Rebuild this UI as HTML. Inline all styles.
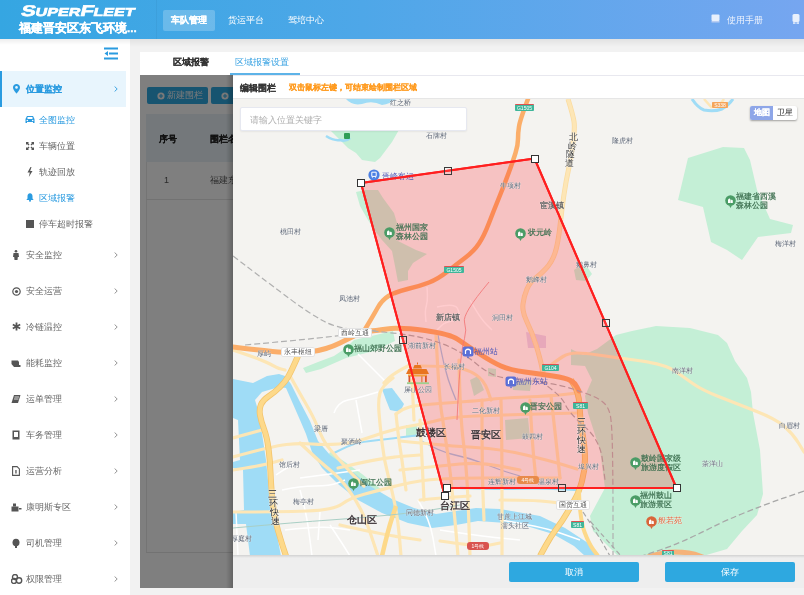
<!DOCTYPE html>
<html><head><meta charset="utf-8">
<style>
*{margin:0;padding:0;box-sizing:border-box}
html,body{width:804px;height:595px;overflow:hidden;background:#f2f2f2;font-family:"Liberation Sans",sans-serif}
#wrap{position:absolute;left:0;top:0;width:804px;height:595px;will-change:transform}
.abs{position:absolute}
[style*="font-weight:bold"]{-webkit-text-stroke:0.12px}
.nav[style*="font-weight:bold"]{-webkit-text-stroke:0.2px}
#hdr{left:0;top:0;width:804px;height:39px;background:linear-gradient(90deg,#35a6e2 0%,#4ea7e8 45%,#76a6f0 100%)}
#logo{left:21px;top:3px;color:#fff;font-weight:bold;font-style:italic;font-size:15px;letter-spacing:0px;white-space:nowrap}
#sub{left:19px;top:20.5px;color:#fff;font-weight:bold;font-size:11.7px;line-height:14px;white-space:nowrap;-webkit-text-stroke:0.3px #fff}
.nav{top:10px;height:21px;line-height:21px;color:#fff;font-size:9px;white-space:nowrap}
#side{left:0;top:39px;width:130px;height:556px;background:#fff}
.mi{position:absolute;left:0;width:130px;height:36px;font-size:9px;color:#666}
.mi .t{position:absolute;left:26px;top:13px;line-height:10px;white-space:nowrap}
.mi .ch{position:absolute;left:114px;top:15px}
.si{position:absolute;left:0;width:130px;height:26px;font-size:9px;color:#666}
.si .t{position:absolute;left:39px;top:8px;line-height:10px;white-space:nowrap}
</style></head><body><div id="wrap">
<div id="hdr" class="abs"></div>
<svg class="abs" style="left:17px;top:2px" width="122" height="17" viewBox="0 0 122 17"><g transform="skewX(-14)"><text x="7" y="14.5" fill="#fff" stroke="#fff" stroke-width="0.6" font-family="Liberation Sans" font-weight="bold" textLength="113.5" lengthAdjust="spacingAndGlyphs"><tspan font-size="15.5">S</tspan><tspan font-size="11.5">UPER</tspan><tspan font-size="15.5">F</tspan><tspan font-size="11.5">LEET</tspan></text></g></svg>
<div id="sub" class="abs">福建晋安区东飞环境...</div>
<div class="abs" style="left:156px;top:0;width:1px;height:39px;background:rgba(0,0,0,0.04)"></div>
<div class="abs nav" style="left:163px;width:52px;background:rgba(255,255,255,0.22);border-radius:2px;font-weight:bold;text-align:center">车队管理</div>
<div class="abs nav" style="left:228px">货运平台</div>
<div class="abs nav" style="left:288px">驾培中心</div>
<div class="abs nav" style="left:727px;color:#eef3fd">使用手册</div>
<svg class="abs" style="left:711px;top:14px" width="9" height="9" viewBox="0 0 9 9"><rect x="0.5" y="0.5" width="8" height="6.5" rx="1" fill="#e8f0fc"/><rect x="0.5" y="7" width="8" height="1.5" fill="#b9cdf2"/></svg>
<svg class="abs" style="left:792px;top:14px" width="8" height="10" viewBox="0 0 8 10"><rect x="0.5" y="0" width="7" height="8" rx="1.5" fill="#e8f0fc"/><rect x="1" y="8.3" width="2.5" height="1.5" fill="#e8f0fc"/><rect x="4.5" y="8.3" width="2.5" height="1.5" fill="#e8f0fc"/></svg>

<div id="side" class="abs">
<svg class="abs" style="left:104px;top:8px" width="15" height="13" viewBox="0 0 15 13"><rect x="0" y="0.5" width="14" height="2" fill="#2a9be0"/><rect x="5" y="5.5" width="9" height="2" fill="#2a9be0"/><rect x="0" y="10.5" width="14" height="2" fill="#2a9be0"/><path d="M0.5 6.5 L4 4 L4 9 Z" fill="#2a9be0"/></svg>
<div class="mi" style="top:32px;background:#e8f5fd;border-left:2px solid #2a9be0;width:126px">
 <svg class="abs" style="left:11px;top:13px" width="7" height="10" viewBox="0 0 7 10"><path d="M3.5 0C1.6 0 0 1.5 0 3.4 0 5.8 3.5 9.5 3.5 9.5S7 5.8 7 3.4C7 1.5 5.4 0 3.5 0Z" fill="#2a9be0"/><circle cx="3.5" cy="3.4" r="1.3" fill="#e8f5fd"/></svg>
 <div class="t" style="left:24px;color:#2a9be0;font-weight:bold">位置监控</div>
 <svg class="ch" style="left:112px" width="4" height="6" viewBox="0 0 4 6"><path d="M0.6 0.5L3.2 3L0.6 5.5" stroke="#2a9be0" stroke-width="0.9" fill="none"/></svg>
</div>
<div class="si" style="top:68px;color:#2a9be0"><svg class="abs" style="left:25px;top:8px" width="10" height="9" viewBox="0 0 10 9"><path d="M2 1 L8 1 L9.5 4 L9.5 8 L8 8 L8 7 L2 7 L2 8 L0.5 8 L0.5 4 Z" fill="#2a9be0"/><rect x="2.5" y="2" width="5" height="2" fill="#fff"/><circle cx="2.3" cy="5.5" r="0.8" fill="#fff"/><circle cx="7.7" cy="5.5" r="0.8" fill="#fff"/></svg><div class="t">全图监控</div></div>
<div class="si" style="top:94px"><svg class="abs" style="left:26px;top:9px" width="8" height="8" viewBox="0 0 8 8"><path d="M0 0h3L2 1l1.5 1.5-1 1L1 2 0 3zM8 0v3L7 2 5.5 3.5l-1-1L6 1 5 0zM0 8V5l1 1 1.5-1.5 1 1L2 7l1 1zM8 8H5l1-1-1.5-1.5 1-1L7 6l1-1z" fill="#555"/></svg><div class="t">车辆位置</div></div>
<div class="si" style="top:120px"><svg class="abs" style="left:27px;top:8px" width="6" height="10" viewBox="0 0 6 10"><path d="M3.5 0 L0.5 5.5 L2.8 5.5 L1.8 10 L5.5 4 L3.2 4 L4.5 0Z" fill="#555"/></svg><div class="t">轨迹回放</div></div>
<div class="si" style="top:146px;color:#2a9be0"><svg class="abs" style="left:26px;top:8px" width="8" height="9" viewBox="0 0 8 9"><path d="M4 0.3C2.3 0.3 1.5 1.7 1.5 3.3V5.5L0.3 7H7.7L6.5 5.5V3.3C6.5 1.7 5.7 0.3 4 0.3Z" fill="#2a9be0"/><circle cx="4" cy="7.8" r="1" fill="#2a9be0"/></svg><div class="t">区域报警</div></div>
<div class="si" style="top:172px"><div class="abs" style="left:26px;top:9px;width:8px;height:8px;background:#555"></div><div class="t">停车超时报警</div></div>
<div class="mi" style="top:198px"><svg class="abs" style="left:12px;top:13px" width="8" height="10" viewBox="0 0 8 10"><circle cx="4" cy="1.3" r="1.3" fill="#555"/><path d="M1.5 3h5l0.5 4h-1.2l-0.3 3h-3l-0.3-3H1z" fill="#555"/></svg><div class="t">安全监控</div><svg class="ch" width="4" height="6" viewBox="0 0 4 6"><path d="M0.6 0.5L3.2 3L0.6 5.5" stroke="#888" stroke-width="0.9" fill="none"/></svg></div>
<div class="mi" style="top:234px"><svg class="abs" style="left:12px;top:14px" width="9" height="9" viewBox="0 0 9 9"><circle cx="4.5" cy="4.5" r="3.7" fill="none" stroke="#555" stroke-width="1.2"/><circle cx="4.5" cy="4.5" r="1.6" fill="#555"/></svg><div class="t">安全运营</div><svg class="ch" width="4" height="6" viewBox="0 0 4 6"><path d="M0.6 0.5L3.2 3L0.6 5.5" stroke="#888" stroke-width="0.9" fill="none"/></svg></div>
<div class="mi" style="top:270px"><svg class="abs" style="left:12px;top:13px" width="9" height="9" viewBox="0 0 9 9"><path d="M4.5 0.5V8.5M0.8 2.5L8.2 6.5M0.8 6.5L8.2 2.5" stroke="#555" stroke-width="1.8"/></svg><div class="t">冷链温控</div><svg class="ch" width="4" height="6" viewBox="0 0 4 6"><path d="M0.6 0.5L3.2 3L0.6 5.5" stroke="#888" stroke-width="0.9" fill="none"/></svg></div>
<div class="mi" style="top:306px"><svg class="abs" style="left:11px;top:14px" width="10" height="9" viewBox="0 0 10 9"><path d="M0.5 1.5h6.5l1 1.5v5H3L0.5 5z" fill="#555"/><rect x="7.5" y="6" width="2" height="2" fill="#555"/></svg><div class="t">能耗监控</div><svg class="ch" width="4" height="6" viewBox="0 0 4 6"><path d="M0.6 0.5L3.2 3L0.6 5.5" stroke="#888" stroke-width="0.9" fill="none"/></svg></div>
<div class="mi" style="top:342px"><svg class="abs" style="left:11px;top:13px" width="10" height="10" viewBox="0 0 10 10"><path d="M3 1h6.5L7 9H0.5z" fill="#555"/><path d="M3.5 3h4.5M3 5h4.5" stroke="#fff" stroke-width="0.8"/></svg><div class="t">运单管理</div><svg class="ch" width="4" height="6" viewBox="0 0 4 6"><path d="M0.6 0.5L3.2 3L0.6 5.5" stroke="#888" stroke-width="0.9" fill="none"/></svg></div>
<div class="mi" style="top:378px"><svg class="abs" style="left:12px;top:13px" width="8" height="10" viewBox="0 0 8 10"><rect x="0.5" y="0.5" width="7" height="9" fill="#555"/><rect x="2" y="2" width="4" height="5" fill="#fff"/></svg><div class="t">车务管理</div><svg class="ch" width="4" height="6" viewBox="0 0 4 6"><path d="M0.6 0.5L3.2 3L0.6 5.5" stroke="#888" stroke-width="0.9" fill="none"/></svg></div>
<div class="mi" style="top:414px"><svg class="abs" style="left:12px;top:13px" width="8" height="10" viewBox="0 0 8 10"><path d="M0.6 0.6h4.5l2.3 2.3v6.5H0.6z" fill="none" stroke="#555" stroke-width="1.1"/><rect x="3.3" y="4" width="1.3" height="3.5" fill="#555"/></svg><div class="t">运营分析</div><svg class="ch" width="4" height="6" viewBox="0 0 4 6"><path d="M0.6 0.5L3.2 3L0.6 5.5" stroke="#888" stroke-width="0.9" fill="none"/></svg></div>
<div class="mi" style="top:450px"><svg class="abs" style="left:11px;top:14px" width="11" height="9" viewBox="0 0 11 9"><rect x="2" y="0.5" width="3" height="3" fill="#555"/><rect x="0.5" y="3.5" width="7" height="5" fill="#555"/><rect x="8" y="5" width="2.5" height="1.5" fill="#555"/></svg><div class="t">康明斯专区</div><svg class="ch" width="4" height="6" viewBox="0 0 4 6"><path d="M0.6 0.5L3.2 3L0.6 5.5" stroke="#888" stroke-width="0.9" fill="none"/></svg></div>
<div class="mi" style="top:486px"><svg class="abs" style="left:12px;top:13px" width="8" height="10" viewBox="0 0 8 10"><ellipse cx="4" cy="4.5" rx="3.5" ry="3.8" fill="#555"/><rect x="3" y="7" width="2" height="3" fill="#555"/></svg><div class="t">司机管理</div><svg class="ch" width="4" height="6" viewBox="0 0 4 6"><path d="M0.6 0.5L3.2 3L0.6 5.5" stroke="#888" stroke-width="0.9" fill="none"/></svg></div>
<div class="mi" style="top:522px"><svg class="abs" style="left:11px;top:13px" width="12" height="10" viewBox="0 0 12 10"><circle cx="4" cy="3" r="2.5" fill="none" stroke="#555" stroke-width="1.4"/><circle cx="3" cy="7" r="2.5" fill="none" stroke="#555" stroke-width="1.4"/><circle cx="8" cy="6.5" r="2.7" fill="none" stroke="#555" stroke-width="1.4"/></svg><div class="t">权限管理</div><svg class="ch" width="4" height="6" viewBox="0 0 4 6"><path d="M0.6 0.5L3.2 3L0.6 5.5" stroke="#888" stroke-width="0.9" fill="none"/></svg></div>
</div>

<!-- content -->
<div class="abs" style="left:130px;top:39px;width:674px;height:8px;background:linear-gradient(#e2e2e2,#f2f2f2)"></div>
<div class="abs" style="left:0;top:39px;width:130px;height:6px;background:linear-gradient(rgba(0,0,0,0.07),rgba(0,0,0,0))"></div>
<div class="abs" style="left:140px;top:52px;width:664px;height:23px;background:#fff"></div>
<div class="abs" style="left:173px;top:57px;font-size:9px;line-height:10px;color:#333;font-weight:bold;white-space:nowrap">区域报警</div>
<div class="abs" style="left:235px;top:57px;font-size:9px;line-height:10px;color:#3aa3e3;white-space:nowrap">区域报警设置</div>
<div class="abs" style="left:230px;top:73px;width:70px;height:2px;background:#5db3e8"></div>
<div class="abs" style="left:140px;top:75px;width:664px;height:513px;background:#fff">
  <div class="abs" style="left:7px;top:12px;width:61px;height:17px;background:#2fa8e1;border-radius:2px"></div>
  <div class="abs" style="left:71px;top:12px;width:61px;height:17px;background:#2fa8e1;border-radius:2px"></div>
  <div class="abs" style="left:6px;top:39px;width:658px;height:48px;background:#e8f1f6"></div>
  <div class="abs" style="left:6px;top:87px;width:1px;height:390px;background:#e8e8e8"></div>
  <div class="abs" style="left:6px;top:477px;width:658px;height:1px;background:#e4e4e4"></div>
  <div class="abs" style="left:6px;top:124px;width:658px;height:1px;background:#e4e4e4"></div>
  <div class="abs" style="left:19px;top:59px;font-size:9px;line-height:10px;font-weight:bold;color:#222">序号</div>
  <div class="abs" style="left:70px;top:59px;font-size:9px;line-height:10px;font-weight:bold;color:#222">围栏名称</div>
  <div class="abs" style="left:24px;top:100px;font-size:9px;line-height:10px;color:#555">1</div>
  <div class="abs" style="left:70px;top:100px;font-size:9px;line-height:10px;color:#555">福建东飞</div>
  <svg class="abs" style="left:17px;top:17px" width="8" height="8" viewBox="0 0 8 8"><circle cx="4" cy="4" r="3.6" fill="#f0f0f0"/><path d="M4 2v4M2 4h4" stroke="#2fa8e1" stroke-width="1.1"/></svg>
  <div class="abs" style="left:27px;top:14px;font-size:9px;line-height:13px;color:#f4f4f4">新建围栏</div>
  <svg class="abs" style="left:81px;top:17px" width="8" height="8" viewBox="0 0 8 8"><circle cx="4" cy="4" r="3.6" fill="#f0f0f0"/><path d="M4 2v4M2 4h4" stroke="#2fa8e1" stroke-width="1.1"/></svg>
  <div class="abs" style="left:0;top:0;width:664px;height:513px;background:rgba(0,0,0,0.5)"></div>
</div>
<!-- dialog -->
<div class="abs" style="left:226px;top:75px;width:7px;height:513px;background:linear-gradient(90deg,rgba(0,0,0,0),rgba(0,0,0,0.22))"></div>
<div id="dlg" class="abs" style="left:233px;top:75px;width:571px;height:513px;background:#fff">
  <div class="abs" style="left:0;top:0;width:571px;height:1px;background:#e8e8ef"></div>
  <div class="abs" style="left:7px;top:8px;font-size:9px;line-height:10px;font-weight:bold;color:#333;white-space:nowrap">编辑围栏</div>
  <div class="abs" style="left:56px;top:8px;font-size:8px;line-height:10px;font-weight:bold;color:#ff9a1e;white-space:nowrap">双击鼠标左键，可结束绘制围栏区域</div>
  <div class="abs" style="left:0;top:23px;width:571px;height:1px;background:#e6e6e6"></div>
  <div id="map" class="abs" style="left:0;top:24px;width:571px;height:456px;background:#f4f3f0;overflow:hidden">
<!--MAP-->
<svg class="abs" style="left:0;top:0" width="571" height="456" viewBox="233 99 571 456"><path d="M328,128 L334,134 L340,140 L348,148 L356,153 L362,160 L375,162 L380,158 L386,150 L392,142 L400,128 Z" fill="#c4efd6"/><path d="M356,192 L365,190 L378,190 L383,198 L394,213 L397,223 L396,240 L416,250 L427,254 L413,263 L408,271 L408,280 L398,282 L395,266 L392,251 L382,240 L376,232 L368,220 L360,206 Z" fill="#c4efd6"/><path d="M678,200 L688,158 L723,147 L744,148 L750,160 L757,190 L770,219 L793,225 L791,233 L758,237 L742,260 L727,250 L711,242 L703,207 Z" fill="#c4efd6"/><path d="M571,349 L583,355 L597,349 L616,335 L632,331 L656,326 L690,328 L718,335 L727,343 L735,361 L747,378 L751,392 L753,413 L760,450 L763,494 L757,515 L742,531 L727,549 L703,556 L618,556 L593,531 L590,516 L605,488 L600,450 L588,413 L585,396 L592,380 L585,366 L571,365 Z" fill="#c4efd6"/><path d="M303,368 L318,362 L334,356 L346,348 L354,340 L393,331 L395,341 L374,351 L346,358 L321,369 L306,373 Z" fill="#c4efd6"/><path d="M574,270 L580,266 L588,268 L592,274 L586,281 L576,280 Z" fill="#c4efd6"/><path d="M488,368 L496,369 L496,377 L488,376 Z" fill="#c4efd6"/><path d="M512,381 L532,380 L530,391 L513,390 Z" fill="#c4efd6"/><path d="M470,380 L478,376 L484,390 L474,396 Z" fill="#c4efd6"/><path d="M505,420 L528,418 L530,438 L506,440 Z" fill="#c4efd6"/><path d="M406,425 L417,425 L418,437 L406,437 Z" fill="#c4efd6"/><path d="M330,452 L345,462 L362,474 L382,490 L376,494 L356,482 L338,470 L326,460 Z" fill="#c4efd6"/><path d="M526,332 L546,336 L546,348 L528,348 Z" fill="#e2d2e6"/><path d="M346,99 Q352,106 362,104 Q372,100 382,105 Q390,104 396,99 Z" fill="#9fdcf6"/><path d="M326,136 Q334,141 340,140 Q346,142 350,138" stroke="#9fdcf6" stroke-width="2.5" fill="none"/><path d="M692,99 Q698,108 704,110 Q714,112 722,109 Q729,105 733,99" stroke="#9fdcf6" stroke-width="3" fill="none"/><path d="M704,99 L712,108 M724,99 L719,106" stroke="#fde6b6" stroke-width="2.5" fill="none"/><path d="M233,379 L253,383 L267,376 L279,374 L285,376 L291,384 L299,400 L310,421 L318,441 L330,455 L348,468 L370,486 L392,499 L414,508 L436,514 L456,511 L476,508 L500,509 L540,516 L565,528 L588,543 L598,556 L585,556 L574,546 L553,534 L520,524 L478,521 L456,525 L432,528 L408,523 L382,513 L358,500 L338,484 L322,468 L312,452 L306,434 L300,420 L293,404 L286,388 L279,387 L262,392 L255,400 L258,410 L263,440 L266,460 L269,491 L276,530 L281,556 L233,556 Z" fill="#9fdcf6"/><path d="M233,418 L238,420 L240,460 L233,462 Z" fill="#f4f3f0"/><path d="M233,468 L243,470 L244,510 L233,512 Z" fill="#f4f3f0"/><path d="M233,524 L246,524 L250,556 L233,556 Z" fill="#f4f3f0"/><path d="M334,453 Q350,445 355.5,443.5 Q361,442 378.5,440.0 Q396,438 408.0,436.5 L420,435" stroke="#9fdcf6" stroke-width="2" fill="none"/><path d="M382,389 L392,388 L398,396 L404,404 L400,412 L390,410 L386,400 Z" fill="#9fdcf6"/><path d="M460,488 Q500,489 520.0,488.5 Q540,488 559.5,489.0 L579,490" stroke="#9fdcf6" stroke-width="2.5" fill="none"/><path d="M438,335 Q442,356 445.0,368.0 Q448,380 452.0,390.0 L456,400" stroke="#a7c6e6" stroke-width="1.3" fill="none"/><path d="M420,440 Q440,452 455.0,455.0 Q470,458 485.0,464.0 Q500,470 510.0,473.0 L520,476" stroke="#a7c6e6" stroke-width="1.3" fill="none"/><path d="M358,354 Q370,366 378.0,374.0 L386,382" stroke="#ffffff" stroke-width="1.5" fill="none"/><path d="M334,413 Q338,402 348.0,400.0 Q358,398 368.0,395.0 L378,392" stroke="#ffffff" stroke-width="1.5" fill="none"/><path d="M356,400 L362,433" stroke="#ffffff" stroke-width="1.5" fill="none"/><path d="M418,500 Q430,520 433.0,538.0 L436,556" stroke="#ffffff" stroke-width="1.5" fill="none"/><path d="M300,478 Q330,474 345.0,472.0 L360,470" stroke="#ffffff" stroke-width="1.5" fill="none"/><path d="M440,530 Q480,536 500.0,538.0 L520,540" stroke="#ffffff" stroke-width="1.5" fill="none"/><path d="M470,300 Q480,318 486.0,324.0 L492,330" stroke="#ffffff" stroke-width="1.5" fill="none"/><path d="M500,520 Q540,526 560.0,533.0 L580,540" stroke="#ffffff" stroke-width="1.5" fill="none"/><path d="M330,525 Q340,540 345.0,548.0 L350,556" stroke="#ffffff" stroke-width="1.5" fill="none"/><path d="M276,475 Q286,468 293.0,465.0 L300,462" stroke="#ffffff" stroke-width="1.5" fill="none"/><path d="M282,490 Q300,486 315.0,486.0 Q330,486 337.5,483.0 L345,480" stroke="#ffffff" stroke-width="1.5" fill="none"/><path d="M300,490 Q306,512 308.0,526.0 Q310,540 311.0,548.0 L312,556" stroke="#ffffff" stroke-width="1.5" fill="none"/><path d="M320,512 L318,540" stroke="#ffffff" stroke-width="1.5" fill="none"/><path d="M285,530 Q320,526 335.0,528.0 L350,530" stroke="#ffffff" stroke-width="1.5" fill="none"/><path d="M236,512 L238,556" stroke="#ffffff" stroke-width="1.5" fill="none"/><path d="M427,287 Q428,300 426.5,305.0 Q425,310 425.5,316.0 L426,322" stroke="#ffffff" stroke-width="1.5" fill="none"/><path d="M437,307 Q455,303 457.5,308.5 Q460,314 459.5,317.0 Q459,320 452.0,321.0 Q445,322 441.0,326.0 L437,330" stroke="#ffffff" stroke-width="1.5" fill="none"/><path d="M233,350 Q263,360 270.0,364.0 Q277,368 281.0,369.0 L285,370" stroke="#fde6b5" stroke-width="3.2" fill="none" stroke-linecap="round" stroke-linejoin="round"/><path d="M289,374 Q299,392 306.0,404.0 Q313,416 316.5,424.5 Q320,433 323.0,439.0 Q326,445 331.0,450.5 Q336,456 343.0,464.0 Q350,472 357.0,479.0 L364,486" stroke="#fde6b5" stroke-width="3.2" fill="none" stroke-linecap="round" stroke-linejoin="round"/><path d="M233,457 Q273,446 286.5,444.5 Q300,443 312.0,444.0 Q324,445 339.0,444.0 Q354,443 373.5,436.0 Q393,429 410.5,426.0 Q428,423 439.0,420.0 Q450,417 475.5,416.0 Q501,415 539.0,414.0 L577,413" stroke="#fde6b5" stroke-width="3.2" fill="none" stroke-linecap="round" stroke-linejoin="round"/><path d="M393,378 Q382,386 380.0,393.0 Q378,400 379.0,412.5 Q380,425 382.0,442.5 Q384,460 388.0,475.0 Q392,490 395.0,505.0 Q398,520 399.5,538.0 L401,556" stroke="#fde6b5" stroke-width="3.2" fill="none" stroke-linecap="round" stroke-linejoin="round"/><path d="M396,414 Q402,409 409.5,407.0 Q417,405 446.5,403.0 Q476,401 488.5,399.5 Q501,398 526.0,397.0 Q551,396 564.0,394.5 L577,393" stroke="#fde6b5" stroke-width="3.2" fill="none" stroke-linecap="round" stroke-linejoin="round"/><path d="M396,414 Q398,434 400.0,447.0 Q402,460 404.0,475.0 L406,490" stroke="#fde6b5" stroke-width="3.2" fill="none" stroke-linecap="round" stroke-linejoin="round"/><path d="M436,335 Q439,396 441.5,412.0 Q444,428 447.0,449.0 Q450,470 451.0,480.0 Q452,490 453.5,505.0 Q455,520 456.5,538.0 L458,556" stroke="#fde6b5" stroke-width="3.2" fill="none" stroke-linecap="round" stroke-linejoin="round"/><path d="M459,360 Q460,416 463.5,443.0 Q467,470 468.5,513.0 L470,556" stroke="#fde6b5" stroke-width="3.2" fill="none" stroke-linecap="round" stroke-linejoin="round"/><path d="M400,441 Q450,446 475.5,447.5 Q501,449 526.0,455.0 Q551,461 564.0,465.0 L577,469" stroke="#fde6b5" stroke-width="3.2" fill="none" stroke-linecap="round" stroke-linejoin="round"/><path d="M420,366 Q443,366 455.0,367.5 Q467,369 475.5,374.5 Q484,380 487.5,390.0 L491,400" stroke="#fde6b5" stroke-width="3.2" fill="none" stroke-linecap="round" stroke-linejoin="round"/><path d="M482,400 Q482,470 483.0,495.0 L484,520" stroke="#fde6b5" stroke-width="3.2" fill="none" stroke-linecap="round" stroke-linejoin="round"/><path d="M501,400 Q502,440 502.0,498.0 L502,556" stroke="#fde6b5" stroke-width="3.2" fill="none" stroke-linecap="round" stroke-linejoin="round"/><path d="M233,512 Q280,512 307.0,511.0 Q334,510 342.0,504.0 Q350,498 365.0,494.0 Q380,490 400.0,485.0 Q420,480 440.0,479.0 Q460,478 480.0,478.0 Q500,478 530.0,478.0 L560,478" stroke="#fde6b5" stroke-width="3.2" fill="none" stroke-linecap="round" stroke-linejoin="round"/><path d="M440,541 Q480,547 490.0,545.0 L500,543" stroke="#fde6b5" stroke-width="3.2" fill="none" stroke-linecap="round" stroke-linejoin="round"/><path d="M300,443 Q320,462 330.0,470.0 Q340,478 348.0,489.0 Q356,500 361.0,510.0 Q366,520 372.0,538.0 L378,556" stroke="#fde6b5" stroke-width="3.2" fill="none" stroke-linecap="round" stroke-linejoin="round"/><path d="M408,366 Q394,373 389.0,378.0 L384,383" stroke="#fde6b5" stroke-width="3.2" fill="none" stroke-linecap="round" stroke-linejoin="round"/><path d="M233,470 Q260,466 271.0,463.0 L282,460" stroke="#fde6b5" stroke-width="3.2" fill="none" stroke-linecap="round" stroke-linejoin="round"/><path d="M541,373 Q557,360 563.0,356.5 Q569,353 577.0,353.0 Q585,353 598.0,355.0 Q611,357 638.0,360.5 Q665,364 675.0,371.0 Q685,378 693.5,384.0 Q702,390 718.5,396.5 Q735,403 755.5,411.0 Q776,419 784.5,426.5 Q793,434 798.5,443.0 L804,452" stroke="#fde6b5" stroke-width="3.2" fill="none" stroke-linecap="round" stroke-linejoin="round"/><path d="M530,400 Q532,440 534.0,460.0 L536,480" stroke="#fde6b5" stroke-width="3.2" fill="none" stroke-linecap="round" stroke-linejoin="round"/><path d="M551,396 Q556,440 558.0,459.0 L560,478" stroke="#fde6b5" stroke-width="3.2" fill="none" stroke-linecap="round" stroke-linejoin="round"/><path d="M500,500 Q540,500 555.0,502.5 L570,505" stroke="#fde6b5" stroke-width="3.2" fill="none" stroke-linecap="round" stroke-linejoin="round"/><path d="M233,438 L262,430" stroke="#fde6b5" stroke-width="3.2" fill="none" stroke-linecap="round" stroke-linejoin="round"/><path d="M400,470 Q440,466 460.0,464.0 Q480,462 500.0,466.0 L520,470" stroke="#fde6b5" stroke-width="3.2" fill="none" stroke-linecap="round" stroke-linejoin="round"/><path d="M420,500 Q440,498 455.0,497.0 L470,496" stroke="#fde6b5" stroke-width="3.2" fill="none" stroke-linecap="round" stroke-linejoin="round"/><path d="M420,420 Q422,460 423.0,480.0 L424,500" stroke="#fde6b5" stroke-width="3.2" fill="none" stroke-linecap="round" stroke-linejoin="round"/><path d="M412,380 L414,420" stroke="#fde6b5" stroke-width="3.2" fill="none" stroke-linecap="round" stroke-linejoin="round"/><path d="M338,468 Q380,458 400.0,456.5 L420,455" stroke="#fde6b5" stroke-width="3.2" fill="none" stroke-linecap="round" stroke-linejoin="round"/><path d="M340,525 Q380,534 400.0,537.0 L420,540" stroke="#fde6b5" stroke-width="3.2" fill="none" stroke-linecap="round" stroke-linejoin="round"/><path d="M568,99 Q573,115 574.0,121.5 Q575,128 573.0,143.0 Q571,158 568.5,169.5 Q566,181 564.0,194.5 Q562,208 560.0,226.0 Q558,244 555.0,253.0 Q552,262 546.0,268.5 Q540,275 535.0,278.5 Q530,282 527.0,289.0 Q524,296 523.0,304.0 Q522,312 527.0,322.0 Q532,332 536.0,345.0 Q540,358 541.5,365.5 L543,373" stroke="#fbdca0" stroke-width="5" fill="none"/><path d="M568,99 Q573,115 574.0,121.5 Q575,128 573.0,143.0 Q571,158 568.5,169.5 Q566,181 564.0,194.5 Q562,208 560.0,226.0 Q558,244 555.0,253.0 Q552,262 546.0,268.5 Q540,275 535.0,278.5 Q530,282 527.0,289.0 Q524,296 523.0,304.0 Q522,312 527.0,322.0 Q532,332 536.0,345.0 Q540,358 541.5,365.5 L543,373" stroke="#fde6b6" stroke-width="3.5" fill="none"/><path d="M298,356 Q291,372 288.0,377.0 Q285,382 280.0,387.0 Q275,392 269.0,396.0 Q263,400 261.0,404.5 Q259,409 260.0,415.0 Q261,421 264.0,429.0 Q267,437 268.5,448.5 Q270,460 270.5,472.5 Q271,485 272.5,501.0 Q274,517 278.0,530.5 Q282,544 284.0,550.0 L286,556" stroke="#f3c46c" stroke-width="6" fill="none"/><path d="M298,356 Q291,372 288.0,377.0 Q285,382 280.0,387.0 Q275,392 269.0,396.0 Q263,400 261.0,404.5 Q259,409 260.0,415.0 Q261,421 264.0,429.0 Q267,437 268.5,448.5 Q270,460 270.5,472.5 Q271,485 272.5,501.0 Q274,517 278.0,530.5 Q282,544 284.0,550.0 L286,556" stroke="#fdd98a" stroke-width="4.5" fill="none"/><path d="M571,380 Q579,391 579.5,405.5 Q580,420 582.5,434.0 Q585,448 585.0,459.0 Q585,470 582.0,481.0 Q579,492 575.0,499.0 Q571,506 567.0,513.0 Q563,520 557.0,528.0 Q551,536 545.5,546.0 L540,556" stroke="#f3c46c" stroke-width="6" fill="none"/><path d="M571,380 Q579,391 579.5,405.5 Q580,420 582.5,434.0 Q585,448 585.0,459.0 Q585,470 582.0,481.0 Q579,492 575.0,499.0 Q571,506 567.0,513.0 Q563,520 557.0,528.0 Q551,536 545.5,546.0 L540,556" stroke="#fdd98a" stroke-width="4.5" fill="none"/><path d="M579,492 Q580,520 584.5,532.0 Q589,544 593.5,550.0 L598,556" stroke="#fdd98a" stroke-width="4" fill="none"/><path d="M382,556 Q388,530 392.0,518.0 L396,506" stroke="#fdd98a" stroke-width="4.5" fill="none"/><path d="M528,99 Q520,120 519.0,126.5 Q518,133 518.0,139.0 Q518,145 515.5,153.0 Q513,161 509.0,172.0 Q505,183 499.5,196.5 Q494,210 489.0,223.0 Q484,236 479.0,243.5 Q474,251 465.5,257.5 Q457,264 447.5,271.5 Q438,279 429.0,282.5 Q420,286 407.5,289.0 Q395,292 388.5,296.0 Q382,300 377.5,308.0 Q373,316 368.5,323.5 L364,331" stroke="#fbae6a" stroke-width="4.5" fill="none" stroke-linecap="round"/><path d="M233,347 Q273,352 286.5,352.5 Q300,353 309.0,352.0 Q318,351 326.0,348.5 Q334,346 340.0,343.0 Q346,340 355.0,335.5 Q364,331 369.0,331.0 Q374,331 387.0,329.0 Q400,327 425.0,330.5 Q450,334 458.0,339.5 Q466,345 479.0,353.5 Q492,362 501.0,366.0 Q510,370 525.0,372.0 Q540,374 553.0,376.0 Q566,378 570.5,380.5 Q575,383 577.0,387.0 L579,391" stroke="#fbae6a" stroke-width="5" fill="none" stroke-linecap="round"/><path d="M489,282 Q462,314 464.5,322.0 Q467,330 464.5,338.5 Q462,347 460.5,363.5 Q459,380 458.0,400.0 L457,420" stroke="#f08c8c" stroke-width="0.8" fill="none"/><path d="M640,560 Q660,552 675.0,552.0 Q690,552 700.0,556.0 L710,560" stroke="#f5b27a" stroke-width="5" fill="none"/><path d="M233,256 Q271,285 290.0,299.0 Q309,313 322.5,320.5 Q336,328 355.0,329.5 Q374,331 397.0,333.5 Q420,336 440.0,343.0 Q460,350 476.0,363.5 Q492,377 506.0,378.0 Q520,379 540.5,382.0 Q561,385 573.0,389.0 Q585,393 592.5,396.0 Q600,399 604.5,403.5 Q609,408 610.5,416.5 Q612,425 612.5,452.5 Q613,480 613.0,518.0 L613,556" stroke="#b0b0b0" stroke-width="1.2" fill="none" stroke-dasharray="6,3"/><path d="M245,345 Q334,337 355.0,333.5 L376,330" stroke="#b0b0b0" stroke-width="1.2" fill="none" stroke-dasharray="6,3"/><path d="M540,381 Q561,395 565.0,404.0 Q569,413 584.5,426.5 Q600,440 602.5,460.0 L605,480" stroke="#b0b0b0" stroke-width="1.2" fill="none" stroke-dasharray="6,3"/><path d="M804,491 Q742,512 711.5,527.5 Q681,543 661.5,549.5 L642,556" stroke="#a8a8a8" stroke-width="1.3" fill="none" stroke-dasharray="6,3"/><path d="M590,521 Q605,538 613.0,547.0 L621,556" stroke="#a8a8a8" stroke-width="1.2" fill="none" stroke-dasharray="5,3"/><path d="M583,512 Q598,535 604.0,545.5 L610,556" stroke="#a8a8a8" stroke-width="1.2" fill="none" stroke-dasharray="5,3"/><path d="M233,528 Q300,522 330.0,520.0 Q360,518 390.0,515.0 Q420,512 440.0,508.5 L460,505" stroke="#a9cfc5" stroke-width="1" fill="none"/><path d="M361,183 L534.5,158.5 L676.5,488 L446,488 L444,493 Z" fill="rgba(255,0,10,0.2)" stroke="#ff1f1f" stroke-width="2" stroke-linejoin="round"/></svg>
<div class="abs" style="left:192.5px;top:31.5px;width:21px;text-align:center;font-size:7px;line-height:9px;color:#5a6372;font-weight:normal;white-space:nowrap;text-shadow:0 0 1px #fff,0 0 1px #fff;">石牌村</div><div class="abs" style="left:378.5px;top:36.5px;width:21px;text-align:center;font-size:7px;line-height:9px;color:#5a6372;font-weight:normal;white-space:nowrap;text-shadow:0 0 1px #fff,0 0 1px #fff;">隆虎村</div><div class="abs" style="left:266.5px;top:81.5px;width:21px;text-align:center;font-size:7px;line-height:9px;color:#5a6372;font-weight:normal;white-space:nowrap;text-shadow:0 0 1px #fff,0 0 1px #fff;">牛项村</div><div class="abs" style="left:46.5px;top:127.5px;width:21px;text-align:center;font-size:7px;line-height:9px;color:#5a6372;font-weight:normal;white-space:nowrap;text-shadow:0 0 1px #fff,0 0 1px #fff;">桃田村</div><div class="abs" style="left:105.5px;top:194.5px;width:21px;text-align:center;font-size:7px;line-height:9px;color:#5a6372;font-weight:normal;white-space:nowrap;text-shadow:0 0 1px #fff,0 0 1px #fff;">凤池村</div><div class="abs" style="left:258.5px;top:213.5px;width:21px;text-align:center;font-size:7px;line-height:9px;color:#5a6372;font-weight:normal;white-space:nowrap;text-shadow:0 0 1px #fff,0 0 1px #fff;">洞田村</div><div class="abs" style="left:342.5px;top:160.5px;width:21px;text-align:center;font-size:7px;line-height:9px;color:#5a6372;font-weight:normal;white-space:nowrap;text-shadow:0 0 1px #fff,0 0 1px #fff;">鹅鼻村</div><div class="abs" style="left:292.5px;top:175.5px;width:21px;text-align:center;font-size:7px;line-height:9px;color:#5a6372;font-weight:normal;white-space:nowrap;text-shadow:0 0 1px #fff,0 0 1px #fff;">鹅峰村</div><div class="abs" style="left:541.5px;top:139.5px;width:21px;text-align:center;font-size:7px;line-height:9px;color:#5a6372;font-weight:normal;white-space:nowrap;text-shadow:0 0 1px #fff,0 0 1px #fff;">梅洋村</div><div class="abs" style="left:24.0px;top:249.5px;width:14px;text-align:center;font-size:7px;line-height:9px;color:#5a6372;font-weight:normal;white-space:nowrap;text-shadow:0 0 1px #fff,0 0 1px #fff;">厚屿</div><div class="abs" style="left:175.0px;top:241.5px;width:28px;text-align:center;font-size:7px;line-height:9px;color:#5a6372;font-weight:normal;white-space:nowrap;text-shadow:0 0 1px #fff,0 0 1px #fff;">湖前新村</div><div class="abs" style="left:210.5px;top:262.5px;width:21px;text-align:center;font-size:7px;line-height:9px;color:#5a6372;font-weight:normal;white-space:nowrap;text-shadow:0 0 1px #fff,0 0 1px #fff;">长福村</div><div class="abs" style="left:171.0px;top:285.5px;width:28px;text-align:center;font-size:7px;line-height:9px;color:#5a6372;font-weight:normal;white-space:nowrap;text-shadow:0 0 1px #fff,0 0 1px #fff;">屏山公园</div><div class="abs" style="left:239.0px;top:306.5px;width:28px;text-align:center;font-size:7px;line-height:9px;color:#5a6372;font-weight:normal;white-space:nowrap;text-shadow:0 0 1px #fff,0 0 1px #fff;">二化新村</div><div class="abs" style="left:288.5px;top:332.5px;width:21px;text-align:center;font-size:7px;line-height:9px;color:#5a6372;font-weight:normal;white-space:nowrap;text-shadow:0 0 1px #fff,0 0 1px #fff;">鼓四村</div><div class="abs" style="left:81.0px;top:324.5px;width:14px;text-align:center;font-size:7px;line-height:9px;color:#5a6372;font-weight:normal;white-space:nowrap;text-shadow:0 0 1px #fff,0 0 1px #fff;">梁厝</div><div class="abs" style="left:107.5px;top:337.5px;width:21px;text-align:center;font-size:7px;line-height:9px;color:#5a6372;font-weight:normal;white-space:nowrap;text-shadow:0 0 1px #fff,0 0 1px #fff;">聚酒岭</div><div class="abs" style="left:45.5px;top:360.5px;width:21px;text-align:center;font-size:7px;line-height:9px;color:#5a6372;font-weight:normal;white-space:nowrap;text-shadow:0 0 1px #fff,0 0 1px #fff;">馆后村</div><div class="abs" style="left:59.5px;top:397.5px;width:21px;text-align:center;font-size:7px;line-height:9px;color:#5a6372;font-weight:normal;white-space:nowrap;text-shadow:0 0 1px #fff,0 0 1px #fff;">梅亭村</div><div class="abs" style="left:173.0px;top:408.5px;width:28px;text-align:center;font-size:7px;line-height:9px;color:#5a6372;font-weight:normal;white-space:nowrap;text-shadow:0 0 1px #fff,0 0 1px #fff;">同德新村</div><div class="abs" style="left:264.0px;top:413.0px;width:35px;text-align:center;font-size:7px;line-height:9px;color:#5a6372;font-weight:normal;white-space:nowrap;text-shadow:0 0 1px #fff,0 0 1px #fff;">甘蔗上江城</div><div class="abs" style="left:267.5px;top:421.5px;width:28px;text-align:center;font-size:7px;line-height:9px;color:#5a6372;font-weight:normal;white-space:nowrap;text-shadow:0 0 1px #fff,0 0 1px #fff;">濡头社区</div><div class="abs" style="left:255.0px;top:377.5px;width:28px;text-align:center;font-size:7px;line-height:9px;color:#5a6372;font-weight:normal;white-space:nowrap;text-shadow:0 0 1px #fff,0 0 1px #fff;">连辉新村</div><div class="abs" style="left:344.5px;top:362.5px;width:21px;text-align:center;font-size:7px;line-height:9px;color:#5a6372;font-weight:normal;white-space:nowrap;text-shadow:0 0 1px #fff,0 0 1px #fff;">埠兴村</div><div class="abs" style="left:438.5px;top:266.5px;width:21px;text-align:center;font-size:7px;line-height:9px;color:#5a6372;font-weight:normal;white-space:nowrap;text-shadow:0 0 1px #fff,0 0 1px #fff;">南洋村</div><div class="abs" style="left:545.5px;top:321.5px;width:21px;text-align:center;font-size:7px;line-height:9px;color:#5a6372;font-weight:normal;white-space:nowrap;text-shadow:0 0 1px #fff,0 0 1px #fff;">白眉村</div><div class="abs" style="left:468.5px;top:359.5px;width:21px;text-align:center;font-size:7px;line-height:9px;color:#5a6372;font-weight:normal;white-space:nowrap;text-shadow:0 0 1px #fff,0 0 1px #fff;">茶洋山</div><div class="abs" style="left:-2.5px;top:434.5px;width:21px;text-align:center;font-size:7px;line-height:9px;color:#5a6372;font-weight:normal;white-space:nowrap;text-shadow:0 0 1px #fff,0 0 1px #fff;">厚庭村</div><div class="abs" style="left:156.5px;top:-1.5px;width:21px;text-align:center;font-size:7px;line-height:9px;color:#5a6372;font-weight:normal;white-space:nowrap;text-shadow:0 0 1px #fff,0 0 1px #fff;">红之桥</div><div class="abs" style="left:304.5px;top:377.5px;width:21px;text-align:center;font-size:7px;line-height:9px;color:#5a6372;font-weight:normal;white-space:nowrap;text-shadow:0 0 1px #fff,0 0 1px #fff;">温泉村</div><div class="abs" style="left:307.0px;top:102.0px;width:24px;text-align:center;font-size:8px;line-height:10px;color:#555;font-weight:normal;white-space:nowrap;text-shadow:0 0 1px #fff,0 0 1px #fff;-webkit-text-stroke:0.2px #555;">宦溪镇</div><div class="abs" style="left:203.0px;top:214.0px;width:24px;text-align:center;font-size:8px;line-height:10px;color:#555;font-weight:normal;white-space:nowrap;text-shadow:0 0 1px #fff,0 0 1px #fff;-webkit-text-stroke:0.2px #555;">新店镇</div><div class="abs" style="left:183.0px;top:328.0px;width:30px;text-align:center;font-size:10px;line-height:12px;color:#332a2e;font-weight:normal;white-space:nowrap;text-shadow:0 0 1px #fff,0 0 1px #fff;-webkit-text-stroke:0.35px #332a2e;">鼓楼区</div><div class="abs" style="left:238.0px;top:330.0px;width:30px;text-align:center;font-size:10px;line-height:12px;color:#332a2e;font-weight:normal;white-space:nowrap;text-shadow:0 0 1px #fff,0 0 1px #fff;-webkit-text-stroke:0.35px #332a2e;">晋安区</div><div class="abs" style="left:207.0px;top:401.0px;width:30px;text-align:center;font-size:10px;line-height:12px;color:#332a2e;font-weight:normal;white-space:nowrap;text-shadow:0 0 1px #fff,0 0 1px #fff;-webkit-text-stroke:0.35px #332a2e;">台江区</div><div class="abs" style="left:114.0px;top:415.0px;width:30px;text-align:center;font-size:10px;line-height:12px;color:#332a2e;font-weight:normal;white-space:nowrap;text-shadow:0 0 1px #fff,0 0 1px #fff;-webkit-text-stroke:0.35px #332a2e;">仓山区</div><div class="abs" style="left:162.5px;top:124.0px;width:32px;text-align:center;font-size:8px;line-height:10px;color:#3b6e4e;font-weight:normal;white-space:nowrap;-webkit-text-stroke:0.2px #3b6e4e;">福州国家</div><div class="abs" style="left:162.5px;top:133.0px;width:32px;text-align:center;font-size:8px;line-height:10px;color:#3b6e4e;font-weight:normal;white-space:nowrap;-webkit-text-stroke:0.2px #3b6e4e;">森林公园</div><div class="abs" style="left:295.0px;top:129.0px;width:24px;text-align:center;font-size:8px;line-height:10px;color:#3b6e4e;font-weight:normal;white-space:nowrap;-webkit-text-stroke:0.2px #3b6e4e;">状元岭</div><div class="abs" style="left:503.0px;top:93.0px;width:40px;text-align:center;font-size:8px;line-height:10px;color:#3b6e4e;font-weight:normal;white-space:nowrap;-webkit-text-stroke:0.2px #3b6e4e;">福建省西溪</div><div class="abs" style="left:503.0px;top:102.0px;width:32px;text-align:center;font-size:8px;line-height:10px;color:#3b6e4e;font-weight:normal;white-space:nowrap;-webkit-text-stroke:0.2px #3b6e4e;">森林公园</div><div class="abs" style="left:121.0px;top:245.0px;width:48px;text-align:center;font-size:8px;line-height:10px;color:#3b6e4e;font-weight:normal;white-space:nowrap;-webkit-text-stroke:0.2px #3b6e4e;">福山郊野公园</div><div class="abs" style="left:297.0px;top:303.0px;width:32px;text-align:center;font-size:8px;line-height:10px;color:#3b6e4e;font-weight:normal;white-space:nowrap;-webkit-text-stroke:0.2px #3b6e4e;">晋安公园</div><div class="abs" style="left:127.0px;top:379.0px;width:32px;text-align:center;font-size:8px;line-height:10px;color:#3b6e4e;font-weight:normal;white-space:nowrap;-webkit-text-stroke:0.2px #3b6e4e;">闽江公园</div><div class="abs" style="left:408.0px;top:355.0px;width:40px;text-align:center;font-size:8px;line-height:10px;color:#3b6e4e;font-weight:normal;white-space:nowrap;-webkit-text-stroke:0.2px #3b6e4e;">鼓岭国家级</div><div class="abs" style="left:408.0px;top:363.5px;width:40px;text-align:center;font-size:8px;line-height:10px;color:#3b6e4e;font-weight:normal;white-space:nowrap;-webkit-text-stroke:0.2px #3b6e4e;">旅游度假区</div><div class="abs" style="left:407.0px;top:392.0px;width:32px;text-align:center;font-size:8px;line-height:10px;color:#3b6e4e;font-weight:normal;white-space:nowrap;-webkit-text-stroke:0.2px #3b6e4e;">福州鼓山</div><div class="abs" style="left:407.0px;top:400.5px;width:32px;text-align:center;font-size:8px;line-height:10px;color:#3b6e4e;font-weight:normal;white-space:nowrap;-webkit-text-stroke:0.2px #3b6e4e;">旅游景区</div><div class="abs" style="left:149.0px;top:73.0px;width:32px;text-align:center;font-size:8px;line-height:10px;color:#5058b8;font-weight:normal;white-space:nowrap;">晋峰客运</div><div class="abs" style="left:241.0px;top:248.0px;width:24px;text-align:center;font-size:8px;line-height:10px;color:#5058b8;font-weight:normal;white-space:nowrap;">福州站</div><div class="abs" style="left:283.0px;top:278.0px;width:32px;text-align:center;font-size:8px;line-height:10px;color:#5058b8;font-weight:normal;white-space:nowrap;">福州东站</div><div class="abs" style="left:425.0px;top:417.0px;width:24px;text-align:center;font-size:8px;line-height:10px;color:#d9663a;font-weight:normal;white-space:nowrap;text-shadow:0 0 1px #fff,0 0 1px #fff;">般若苑</div><div class="abs" style="left:336.0px;top:34.0px;width:8.6px;font-size:8.6px;line-height:8.6px;color:#333;text-shadow:0 0 1px #fff,0 0 1px #fff,0 0 2px #fff">北</div><div class="abs" style="left:334.6px;top:42.7px;width:8.6px;font-size:8.6px;line-height:8.6px;color:#333;text-shadow:0 0 1px #fff,0 0 1px #fff,0 0 2px #fff">岭</div><div class="abs" style="left:333.2px;top:51.4px;width:8.6px;font-size:8.6px;line-height:8.6px;color:#333;text-shadow:0 0 1px #fff,0 0 1px #fff,0 0 2px #fff">隧</div><div class="abs" style="left:331.8px;top:60.1px;width:8.6px;font-size:8.6px;line-height:8.6px;color:#333;text-shadow:0 0 1px #fff,0 0 1px #fff,0 0 2px #fff">道</div><div class="abs" style="left:34.6px;top:391.0px;width:8.8px;font-size:8.8px;line-height:8.8px;color:#222;text-shadow:0 0 1px #fff,0 0 1px #fff,0 0 2px #fff">三</div><div class="abs" style="left:35.8px;top:399.9px;width:8.8px;font-size:8.8px;line-height:8.8px;color:#222;text-shadow:0 0 1px #fff,0 0 1px #fff,0 0 2px #fff">环</div><div class="abs" style="left:37.0px;top:408.8px;width:8.8px;font-size:8.8px;line-height:8.8px;color:#222;text-shadow:0 0 1px #fff,0 0 1px #fff,0 0 2px #fff">快</div><div class="abs" style="left:38.2px;top:417.7px;width:8.8px;font-size:8.8px;line-height:8.8px;color:#222;text-shadow:0 0 1px #fff,0 0 1px #fff,0 0 2px #fff">速</div><div class="abs" style="left:344.1px;top:319.0px;width:8.8px;font-size:8.8px;line-height:8.8px;color:#222;text-shadow:0 0 1px #fff,0 0 1px #fff,0 0 2px #fff">三</div><div class="abs" style="left:344.1px;top:327.9px;width:8.8px;font-size:8.8px;line-height:8.8px;color:#222;text-shadow:0 0 1px #fff,0 0 1px #fff,0 0 2px #fff">环</div><div class="abs" style="left:344.1px;top:336.8px;width:8.8px;font-size:8.8px;line-height:8.8px;color:#222;text-shadow:0 0 1px #fff,0 0 1px #fff,0 0 2px #fff">快</div><div class="abs" style="left:344.1px;top:345.7px;width:8.8px;font-size:8.8px;line-height:8.8px;color:#222;text-shadow:0 0 1px #fff,0 0 1px #fff,0 0 2px #fff">速</div><div class="abs" style="left:282px;top:5px;width:19px;height:7px;background:#3fb69a;border-top:1px solid #e05050;border-radius:1px;color:#fff;font-size:5px;line-height:6px;text-align:center">G1505</div><div class="abs" style="left:211px;top:167px;width:20px;height:7px;background:#3fb69a;border-top:1px solid #e05050;border-radius:1px;color:#fff;font-size:5px;line-height:6px;text-align:center">G1505</div><div class="abs" style="left:309px;top:265px;width:17px;height:7px;background:#3fb69a;border-top:1px solid #e05050;border-radius:1px;color:#fff;font-size:5px;line-height:6px;text-align:center">G104</div><div class="abs" style="left:340px;top:303px;width:15px;height:7px;background:#3fb69a;border-top:1px solid #e05050;border-radius:1px;color:#fff;font-size:5px;line-height:6px;text-align:center">S81</div><div class="abs" style="left:338px;top:422px;width:13px;height:7px;background:#3fb69a;border-top:1px solid #e05050;border-radius:1px;color:#fff;font-size:5px;line-height:6px;text-align:center">S81</div><div class="abs" style="left:429px;top:451px;width:12px;height:6px;background:#3fb69a;border-top:1px solid #e05050;border-radius:1px;color:#fff;font-size:5px;line-height:5px;text-align:center">S81</div><div class="abs" style="left:479px;top:3px;width:16px;height:6px;background:#f5a55a;border-top:1px solid #f5a55a;border-radius:1px;color:#fff;font-size:5px;line-height:5px;text-align:center">S338</div><div class="abs" style="left:234px;top:443px;width:22px;height:8px;background:#d9534f;border-radius:3px;color:#fff;font-size:5px;line-height:8px;text-align:center">1号线</div><div class="abs" style="left:284px;top:377px;width:22px;height:8px;background:#e88a4a;border-radius:3px;color:#fff;font-size:5px;line-height:8px;text-align:center">4号线</div><div class="abs" style="left:105.0px;top:229px;width:34px;height:10px;background:#fff;border:1px solid #e4e4e4;border-radius:2px;color:#555;font-size:7px;line-height:8px;text-align:center">西岭互通</div><div class="abs" style="left:48.0px;top:248px;width:34px;height:10px;background:#fff;border:1px solid #e4e4e4;border-radius:2px;color:#555;font-size:7px;line-height:8px;text-align:center">永丰枢纽</div><div class="abs" style="left:323.0px;top:401px;width:34px;height:10px;background:#fff;border:1px solid #e4e4e4;border-radius:2px;color:#555;font-size:7px;line-height:8px;text-align:center">国货互通</div><svg class="abs" style="left:150.5px;top:127.5px" width="11" height="14" viewBox="0 0 11 14"><circle cx="5.5" cy="5.5" r="5.3" fill="#4a9c66"/><path d="M4 10.2 L5.5 13 L7 10.2Z" fill="#4a9c66"/><path d="M3 8V4.8L4.3 3.3 5.6 4.8V8ZM5.9 8V5.6L6.8 4.6 7.8 5.6V8Z" fill="#fff"/></svg><svg class="abs" style="left:281.5px;top:128.5px" width="11" height="14" viewBox="0 0 11 14"><circle cx="5.5" cy="5.5" r="5.3" fill="#4a9c66"/><path d="M4 10.2 L5.5 13 L7 10.2Z" fill="#4a9c66"/><path d="M3 8V4.8L4.3 3.3 5.6 4.8V8ZM5.9 8V5.6L6.8 4.6 7.8 5.6V8Z" fill="#fff"/></svg><svg class="abs" style="left:491.5px;top:95.5px" width="11" height="14" viewBox="0 0 11 14"><circle cx="5.5" cy="5.5" r="5.3" fill="#4a9c66"/><path d="M4 10.2 L5.5 13 L7 10.2Z" fill="#4a9c66"/><path d="M3 8V4.8L4.3 3.3 5.6 4.8V8ZM5.9 8V5.6L6.8 4.6 7.8 5.6V8Z" fill="#fff"/></svg><svg class="abs" style="left:109.5px;top:244.5px" width="11" height="14" viewBox="0 0 11 14"><circle cx="5.5" cy="5.5" r="5.3" fill="#4a9c66"/><path d="M4 10.2 L5.5 13 L7 10.2Z" fill="#4a9c66"/><path d="M3 8V4.8L4.3 3.3 5.6 4.8V8ZM5.9 8V5.6L6.8 4.6 7.8 5.6V8Z" fill="#fff"/></svg><svg class="abs" style="left:286.5px;top:302.5px" width="11" height="14" viewBox="0 0 11 14"><circle cx="5.5" cy="5.5" r="5.3" fill="#4a9c66"/><path d="M4 10.2 L5.5 13 L7 10.2Z" fill="#4a9c66"/><path d="M3 8V4.8L4.3 3.3 5.6 4.8V8ZM5.9 8V5.6L6.8 4.6 7.8 5.6V8Z" fill="#fff"/></svg><svg class="abs" style="left:114.5px;top:378.5px" width="11" height="14" viewBox="0 0 11 14"><circle cx="5.5" cy="5.5" r="5.3" fill="#4a9c66"/><path d="M4 10.2 L5.5 13 L7 10.2Z" fill="#4a9c66"/><path d="M3 8V4.8L4.3 3.3 5.6 4.8V8ZM5.9 8V5.6L6.8 4.6 7.8 5.6V8Z" fill="#fff"/></svg><svg class="abs" style="left:396.5px;top:357.5px" width="11" height="14" viewBox="0 0 11 14"><circle cx="5.5" cy="5.5" r="5.3" fill="#4a9c66"/><path d="M4 10.2 L5.5 13 L7 10.2Z" fill="#4a9c66"/><path d="M3 8V4.8L4.3 3.3 5.6 4.8V8ZM5.9 8V5.6L6.8 4.6 7.8 5.6V8Z" fill="#fff"/></svg><svg class="abs" style="left:396.5px;top:395.5px" width="11" height="14" viewBox="0 0 11 14"><circle cx="5.5" cy="5.5" r="5.3" fill="#4a9c66"/><path d="M4 10.2 L5.5 13 L7 10.2Z" fill="#4a9c66"/><path d="M3 8V4.8L4.3 3.3 5.6 4.8V8ZM5.9 8V5.6L6.8 4.6 7.8 5.6V8Z" fill="#fff"/></svg><svg class="abs" style="left:229px;top:247px" width="12" height="13" viewBox="0 0 12 13"><rect x="0.5" y="0.5" width="11" height="10" rx="2.5" fill="#5b6fd6"/><path d="M4.5 10.5 L6 12.5 L7.5 10.5Z" fill="#5b6fd6"/><path d="M3.5 8V4.5Q6 2 8.5 4.5V8" stroke="#fff" stroke-width="1.2" fill="none"/></svg><svg class="abs" style="left:272px;top:277px" width="12" height="13" viewBox="0 0 12 13"><rect x="0.5" y="0.5" width="11" height="10" rx="2.5" fill="#5b6fd6"/><path d="M4.5 10.5 L6 12.5 L7.5 10.5Z" fill="#5b6fd6"/><path d="M3.5 8V4.5Q6 2 8.5 4.5V8" stroke="#fff" stroke-width="1.2" fill="none"/></svg><svg class="abs" style="left:135px;top:70px" width="12" height="14" viewBox="0 0 12 14"><circle cx="6" cy="6" r="5.6" fill="#4b7fe3"/><path d="M4.8 11 L6 13.5 L7.2 11Z" fill="#4b7fe3"/><path d="M3.8 3.2h4.4v4.2H3.8z" stroke="#fff" stroke-width="1" fill="none"/><path d="M4.2 8.2l0.6 1M7.8 8.2l-0.6 1" stroke="#fff" stroke-width="0.8"/></svg><svg class="abs" style="left:412.5px;top:416.5px" width="11" height="14" viewBox="0 0 11 14"><circle cx="5.5" cy="5.5" r="5.3" fill="#d9663a"/><path d="M4 10.2 L5.5 13 L7 10.2Z" fill="#d9663a"/><path d="M3 8V4.8L4.3 3.3 5.6 4.8V8ZM5.9 8V5.6L6.8 4.6 7.8 5.6V8Z" fill="#fff"/></svg><div class="abs" style="left:111px;top:34px;width:6px;height:6px;background:#2f9e57;border-radius:1px"></div><svg class="abs" style="left:172px;top:263px" width="26" height="24" viewBox="405 362 26 24"><path d="M417.5 362.5v2" stroke="#e06a20" stroke-width="1"/><path d="M413 368.5 L422 368.5 L420.5 365 L414.5 365Z" fill="#e8751f"/><path d="M406 374 L429 374 L426.5 369 L408.5 369Z" fill="#e8751f"/><path d="M408 374.5h19v2h-19z" fill="#f3a13a"/><rect x="408.5" y="376" width="1.8" height="6.5" fill="#d9542a"/><rect x="425" y="376" width="1.8" height="6.5" fill="#d9542a"/><rect x="421" y="376" width="1.6" height="6.5" fill="#e88a5a"/><rect x="407" y="382.3" width="22" height="1.8" fill="#9ecf8e"/></svg><div class="abs" style="left:7px;top:8px;width:227px;height:24px;background:#fff;border:1px solid #e6e8f0;border-radius:2px;box-shadow:0 1px 2px rgba(0,0,0,0.06)"><div class="abs" style="left:9px;top:7px;font-size:9px;line-height:10px;color:#b0b0b0;white-space:nowrap">请输入位置关键字</div></div><div class="abs" style="left:517px;top:7px;width:47px;height:14px;background:#fff;border-radius:2px;box-shadow:0 1px 2px rgba(0,0,0,0.35)"><div class="abs" style="left:0;top:0;width:23px;height:14px;background:#8ea6e8;border-radius:2px 0 0 2px;color:#fff;font-size:8px;line-height:14px;text-align:center;font-weight:bold">地图</div><div class="abs" style="left:23px;top:0;width:24px;height:14px;color:#222;font-size:8px;line-height:14px;text-align:center">卫星</div></div><svg class="abs" style="left:0;top:0" width="571" height="456" viewBox="233 99 571 456"><path d="M361,183 L534.5,158.5 L676.5,488 L446,488 L444,493 Z" fill="none" stroke="#ff1f1f" stroke-width="2" stroke-linejoin="round"/></svg><div class="abs" style="left:124.0px;top:80.0px;width:8px;height:8px;border:1px solid #333;background:#fff"></div><div class="abs" style="left:297.5px;top:55.5px;width:8px;height:8px;border:1px solid #333;background:#fff"></div><div class="abs" style="left:439.5px;top:385.0px;width:8px;height:8px;border:1px solid #333;background:#fff"></div><div class="abs" style="left:210.0px;top:385.0px;width:8px;height:8px;border:1px solid #333;background:#fff"></div><div class="abs" style="left:208.0px;top:393.0px;width:8px;height:8px;border:1px solid #333;background:#fff"></div><div class="abs" style="left:211.0px;top:68.0px;width:8px;height:8px;border:1px solid #3a3a3a;background:rgba(255,255,255,0.08)"></div><div class="abs" style="left:368.5px;top:220.0px;width:8px;height:8px;border:1px solid #3a3a3a;background:rgba(255,255,255,0.08)"></div><div class="abs" style="left:325.0px;top:385.0px;width:8px;height:8px;border:1px solid #3a3a3a;background:rgba(255,255,255,0.08)"></div><div class="abs" style="left:166.0px;top:237.0px;width:8px;height:8px;border:1px solid #3a3a3a;background:rgba(255,255,255,0.08)"></div>
<!--/MAP-->
  </div>
  <div class="abs" style="left:0;top:480px;width:571px;height:33px;background:#eeeeee"></div>
  <div class="abs" style="left:0;top:480px;width:571px;height:3px;background:linear-gradient(rgba(0,0,0,0.12),rgba(0,0,0,0))"></div>
  <div class="abs" style="left:276px;top:487px;width:130px;height:20px;background:#2ea8e0;border-radius:2px;color:#fff;font-size:9px;line-height:20px;text-align:center">取消</div>
  <div class="abs" style="left:432px;top:487px;width:130px;height:20px;background:#2ea8e0;border-radius:2px;color:#fff;font-size:9px;line-height:20px;text-align:center">保存</div>
</div>

</div></body></html>
